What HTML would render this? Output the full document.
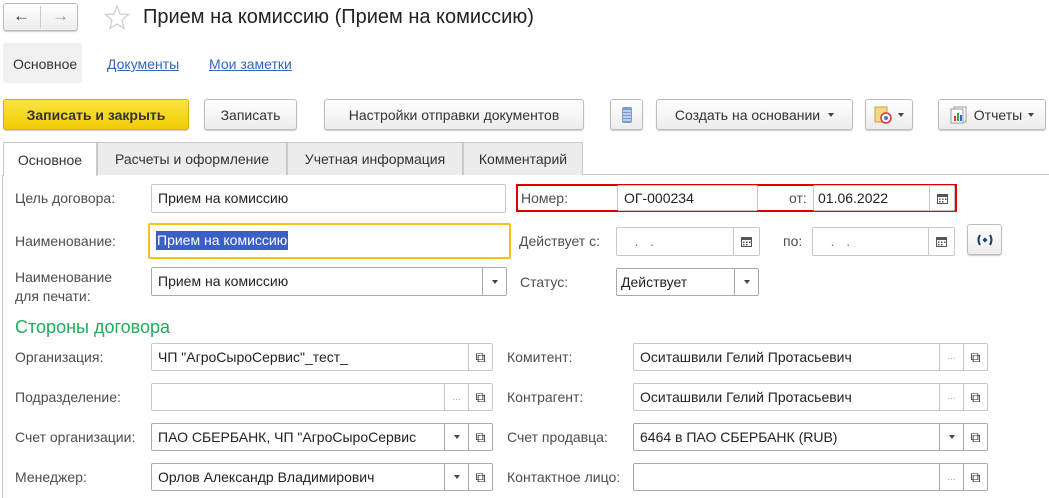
<!DOCTYPE html>
<html><head><meta charset="utf-8"><style>
*{box-sizing:border-box;margin:0;padding:0}
body{width:1049px;height:498px;background:#fff;font-family:"Liberation Sans",Arial,sans-serif;font-size:14px;color:#333;position:relative;overflow:hidden}
.a{position:absolute}
.btn{position:absolute;border:1px solid #bdbdbd;border-radius:3px;background:linear-gradient(#fff,#ececec);box-shadow:0 1px 1px rgba(0,0,0,.2);display:flex;align-items:center;justify-content:center;color:#333;font-size:14px}
.inp{position:absolute;border:1px solid #c8c8c8;border-radius:2px;background:#fff;height:29px;font-size:14px;color:#222;padding-left:6px;line-height:27px;white-space:nowrap;overflow:hidden}
.inp.dark{border-color:#a9a9a9}
.sb{position:absolute;top:0;bottom:0;width:24px;border-left:1px solid #c8c8c8;display:flex;align-items:center;justify-content:center;background:#fff}
.lbl{position:absolute;color:#4d4d4d;font-size:14px}
.tri{width:0;height:0;border-left:3px solid transparent;border-right:3px solid transparent;border-top:4px solid #444}
.dots{color:#aaa;font-size:10px;letter-spacing:0}
.tab{position:absolute;top:142px;height:33px;border:1px solid #c8c8c8;border-bottom:none;background:#ececec;display:flex;align-items:center;justify-content:center;font-size:14px;color:#333}
</style></head><body>
<svg width="0" height="0" style="position:absolute"><defs><g id="cal"><rect x="0.5" y="1.5" width="10" height="9" fill="#fff" stroke="#555"/><rect x="0.5" y="1.5" width="10" height="2.5" fill="#555"/><g fill="#555"><rect x="2" y="5.5" width="1.5" height="1.5"/><rect x="5" y="5.5" width="1.5" height="1.5"/><rect x="8" y="5.5" width="1.5" height="1.5"/><rect x="2" y="8" width="1.5" height="1.5"/><rect x="5" y="8" width="1.5" height="1.5"/></g></g></defs></svg>
<div class="btn" style="left:3px;top:3px;width:75px;height:28px;"></div>
<div class="a" style="left:40px;top:6px;width:1px;height:22px;background:#ccc"></div>
<div class="a" style="left:13px;top:6px;font-size:17px;color:#333">&#8592;</div>
<div class="a" style="left:52px;top:6px;font-size:17px;color:#999">&#8594;</div>
<svg class="a" style="left:104px;top:4px" width="26" height="26" viewBox="0 0 26 26"><polygon points="13,2 16,10 24.5,10.5 18,16 20,24.5 13,20 6,24.5 8,16 1.5,10.5 10,10" fill="none" stroke="#ccc" stroke-width="1.2"/></svg>
<div class="a" style="left:143px;top:6px;font-size:20px;color:#222">Прием на комиссию (Прием на комиссию)</div>
<div class="a" style="left:3px;top:43px;width:79px;height:40px;background:#f0f0f0;border-radius:3px"></div>
<div class="a" style="left:13px;top:56px;color:#333">Основное</div>
<div class="a" style="left:107px;top:56px;color:#3366b8;text-decoration:underline">Документы</div>
<div class="a" style="left:209px;top:56px;color:#3366b8;text-decoration:underline">Мои заметки</div>
<div class="btn" style="left:3px;top:99px;width:186px;height:31px;background:linear-gradient(#fbe444,#f0cc00);border-color:#d4b200;font-weight:bold;color:#333">Записать и закрыть</div>
<div class="btn" style="left:204px;top:99px;width:93px;height:31px">Записать</div>
<div class="btn" style="left:324px;top:99px;width:260px;height:31px">Настройки отправки документов</div>
<div class="btn" style="left:610px;top:99px;width:33px;height:31px"><svg width="12" height="18"><rect x="1" y="1" width="10" height="16" rx="2" fill="#7a9ccc"/><g stroke="#fff" stroke-width="1"><line x1="2" y1="5" x2="10" y2="5"/><line x1="2" y1="8" x2="10" y2="8"/><line x1="2" y1="11" x2="10" y2="11"/><line x1="2" y1="14" x2="10" y2="14"/></g></svg></div>
<div class="btn" style="left:656px;top:99px;width:197px;height:31px;gap:8px">Создать на основании <span class="tri"></span></div>
<div class="btn" style="left:865px;top:99px;width:48px;height:31px;gap:6px"><svg width="18" height="18"><rect x="1" y="1" width="12" height="15" fill="#f1d88a" stroke="#c9a443"/><circle cx="12" cy="12" r="5" fill="#fff" stroke="#d33" stroke-width="1.5"/><circle cx="12" cy="12" r="2" fill="#3a7bd5"/></svg><span class="tri"></span></div>
<div class="btn" style="left:938px;top:99px;width:108px;height:31px;gap:6px"><svg width="18" height="18"><rect x="4" y="1" width="12" height="15" fill="#fff" stroke="#999"/><rect x="1" y="3" width="12" height="14" fill="#fff" stroke="#999"/><rect x="4" y="10" width="2" height="5" fill="#d33"/><rect x="7" y="7" width="2" height="8" fill="#3a3"/><rect x="10" y="9" width="2" height="6" fill="#36c"/></svg>Отчеты <span class="tri"></span></div>
<div class="a" style="left:583px;top:174px;width:466px;height:1px;background:#c8c8c8"></div>
<div class="tab" style="left:97px;width:190px">Расчеты и оформление</div>
<div class="tab" style="left:287px;width:176px">Учетная информация</div>
<div class="tab" style="left:463px;width:120px">Комментарий</div>
<div class="tab" style="left:3px;width:94px;background:#fff;height:34px">Основное</div>
<div class="a" style="left:2px;top:175px;width:1px;height:323px;background:#c8c8c8"></div>
<div class="lbl" style="left:15px;top:190px">Цель договора:</div>
<div class="inp" style="left:151px;top:184px;width:355px">Прием на комиссию</div>
<div class="a" style="left:516px;top:184px;width:441px;height:28px;border:2px solid #e00000"></div>
<div class="lbl" style="left:521px;top:190px">Номер:</div>
<div class="inp" style="left:617px;top:185px;width:141px;height:26px;line-height:24px">ОГ-000234</div>
<div class="lbl" style="left:789px;top:190px">от:</div>
<div class="inp" style="left:813px;top:185px;width:142px;height:26px;line-height:24px;padding-left:4px">01.06.2022<div class="sb" style="right:0;width:25px"><svg width="11" height="11"><use href="#cal"/></svg></div></div>
<div class="lbl" style="left:15px;top:233px">Наименование:</div>
<div class="a" style="left:148px;top:223px;width:363px;height:36px;border:2px solid #f5c21b;border-radius:2px"></div>
<div class="a" style="left:156px;top:231px;height:19px;background:#3a5fc8;color:#fff;padding:0 1px;line-height:19px">Прием на комиссию</div>
<div class="lbl" style="left:519px;top:233px">Действует с:</div>
<div class="inp" style="left:616px;top:227px;width:144px;color:#777">&nbsp;&nbsp;&nbsp;.&nbsp;&nbsp;&nbsp;.<div class="sb" style="right:0;width:26px"><svg width="11" height="11"><use href="#cal"/></svg></div></div>
<div class="lbl" style="left:783px;top:233px">по:</div>
<div class="inp" style="left:812px;top:227px;width:143px;color:#777">&nbsp;&nbsp;&nbsp;.&nbsp;&nbsp;&nbsp;.<div class="sb" style="right:0;width:26px"><svg width="11" height="11"><use href="#cal"/></svg></div></div>
<div class="btn" style="left:967px;top:224px;width:35px;height:31px"><svg width="18" height="12" viewBox="0 0 18 12"><path d="M4 1 Q1 6 4 11" fill="none" stroke="#1a3c6e" stroke-width="2"/><path d="M14 1 Q17 6 14 11" fill="none" stroke="#1a3c6e" stroke-width="2"/><polygon points="6.5,6 9,3.5 11.5,6 9,8.5" fill="#1a3c6e"/></svg></div>
<div class="lbl" style="left:15px;top:268px;line-height:19px">Наименование<br>для печати:</div>
<div class="inp dark" style="left:151px;top:267px;width:356px">Прием на комиссию<div class="sb" style="right:0;border-color:#a9a9a9"><span class="tri"></span></div></div>
<div class="lbl" style="left:520px;top:274px">Статус:</div>
<div class="inp dark" style="left:616px;top:268px;width:143px;height:28px;line-height:26px;padding-left:4px">Действует<div class="sb" style="right:0;border-color:#a9a9a9"><span class="tri"></span></div></div>
<div class="a" style="left:15px;top:317px;font-size:18px;color:#1fae5a">Стороны договора</div>
<div class="lbl" style="left:15px;top:349px">Организация:</div>
<div class="inp" style="left:151px;top:343px;width:342px;height:28px;line-height:26px">ЧП "АгроСыроСервис"_тест_<div class="sb" style="right:0">&#x29C9;</div></div>
<div class="lbl" style="left:15px;top:389px">Подразделение:</div>
<div class="inp" style="left:151px;top:383px;width:342px;height:28px"><div class="sb dots" style="right:24px">...</div><div class="sb" style="right:0">&#x29C9;</div></div>
<div class="lbl" style="left:15px;top:429px">Счет организации:</div>
<div class="inp dark" style="left:151px;top:423px;width:342px;height:28px;line-height:26px">ПАО СБЕРБАНК, ЧП "АгроСыроСервис<div class="sb" style="right:24px;border-color:#a9a9a9"><span class="tri"></span></div><div class="sb" style="right:0;border-color:#a9a9a9">&#x29C9;</div></div>
<div class="lbl" style="left:15px;top:469px">Менеджер:</div>
<div class="inp dark" style="left:151px;top:463px;width:342px;height:28px;line-height:26px">Орлов Александр Владимирович<div class="sb" style="right:24px;border-color:#a9a9a9"><span class="tri"></span></div><div class="sb" style="right:0;border-color:#a9a9a9">&#x29C9;</div></div>
<div class="lbl" style="left:507px;top:349px">Комитент:</div>
<div class="inp" style="left:633px;top:343px;width:355px;height:28px;line-height:26px">Оситашвили Гелий Протасьевич<div class="sb dots" style="right:24px">...</div><div class="sb" style="right:0">&#x29C9;</div></div>
<div class="lbl" style="left:507px;top:389px">Контрагент:</div>
<div class="inp" style="left:633px;top:383px;width:355px;height:28px;line-height:26px">Оситашвили Гелий Протасьевич<div class="sb dots" style="right:24px">...</div><div class="sb" style="right:0">&#x29C9;</div></div>
<div class="lbl" style="left:507px;top:429px">Счет продавца:</div>
<div class="inp dark" style="left:633px;top:423px;width:355px;height:28px;line-height:26px">6464 в ПАО СБЕРБАНК (RUB)<div class="sb" style="right:24px;border-color:#a9a9a9"><span class="tri"></span></div><div class="sb" style="right:0;border-color:#a9a9a9">&#x29C9;</div></div>
<div class="lbl" style="left:507px;top:469px">Контактное лицо:</div>
<div class="inp dark" style="left:633px;top:463px;width:355px;height:28px"><div class="sb dots" style="right:24px;border-color:#a9a9a9">...</div><div class="sb" style="right:0;border-color:#a9a9a9">&#x29C9;</div></div>
</body></html>
